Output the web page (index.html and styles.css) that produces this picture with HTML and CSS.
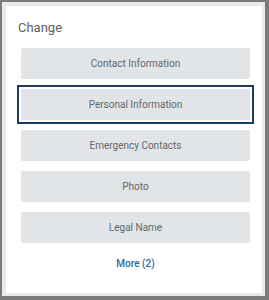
FILE: index.html
```html
<!DOCTYPE html>
<html lang="en">
<head>
    <meta charset="UTF-8">
    <meta name="viewport" content="width=device-width, initial-scale=1.0">
    <title>Change</title>
    <link rel="stylesheet" href="styles.css">
</head>
<body>
    <div class="frame">
        <div class="card">
            <h2 class="title">Change</h2>
            <div class="actions">
                <button class="action">Contact Information</button>
                <button class="action selected">Personal Information</button>
                <button class="action">Emergency Contacts</button>
                <button class="action">Photo</button>
                <button class="action">Legal Name</button>
            </div>
            <a class="more" href="#">More (2)</a>
        </div>
    </div>
</body>
</html>
```

FILE: styles.css
```css
body {
    margin: 0;
    font-family: Roboto, "Liberation Sans", Arial, sans-serif;
}
.frame {
    width: 269px;
    height: 300px;
    box-sizing: border-box;
    border: 2px solid #7b7b7b;
    border-right-width: 4px;
    border-bottom-width: 4px;
    padding: 4px 3px 3px 4px;
    background: #e8eaeb;
}
.card {
    height: 100%;
    box-sizing: border-box;
    background: #fff;
    padding: 14px 12px 0 15px;
}
.title {
    margin: 0 0 12px -3px;
    font-size: 13px;
    line-height: 16px;
    font-weight: 400;
    color: #5e5e5e;
}
.actions {
    display: flex;
    flex-direction: column;
    gap: 10px;
}
.action {
    height: 31px;
    border: none;
    border-radius: 2px;
    background: #e1e5e8;
    color: #63676b;
    font-family: inherit;
    font-size: 10px;
    padding: 0;
    cursor: pointer;
}
.action.selected {
    border-radius: 0;
    outline: 2px solid #1f3a66;
    outline-offset: 2px;
}
.more {
    display: block;
    margin-top: 15px;
    text-align: center;
    font-size: 10px;
    line-height: 12px;
    font-weight: 500;
    color: #2f6a9c;
    text-decoration: none;
}
```
